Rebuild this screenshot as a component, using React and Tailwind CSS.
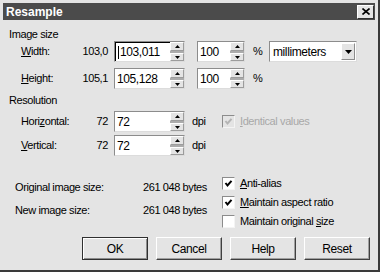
const face = "font-['Liberation_Sans',Arial,sans-serif] tracking-[-0.4px] text-[11px] text-black";

function Tri({ up, color = "#000" }) {
  return (
    <svg width="5" height="3" viewBox="0 0 5 3">
      <path d={up ? "M2.5 0 L5 3 L0 3 Z" : "M0 0 L5 0 L2.5 3 Z"} fill={color} />
    </svg>
  );
}

function Spinner() {
  return (
    <div className="flex flex-col justify-between w-[14px] h-full bg-[#ababab]">
      <div className="h-[9px] flex items-center justify-center bg-[#e4e4e4] border border-t-white border-l-white border-r-[#9c9c9c] border-b-[#9c9c9c]">
        <Tri up />
      </div>
      <div className="h-[8px] flex items-center justify-center bg-[#e4e4e4] border border-t-white border-l-white border-r-[#9c9c9c] border-b-[#9c9c9c]">
        <Tri />
      </div>
    </div>
  );
}

function NumField({ value, w, focused }) {
  return (
    <div
      className={`flex h-[21px] ${w} bg-white border border-t-[#8c8c8c] border-l-[#8c8c8c] border-r-[#dcdcdc] border-b-[#dcdcdc]`}
    >
      <div
        className={`flex-1 flex items-center pl-[2px] ${
          focused ? "border-t border-l border-black" : ""
        }`}
      >
        {focused && <span className="w-px h-[13px] bg-black mr-[1px]" />}
        <span className="text-[12px]">{value}</span>
      </div>
      <Spinner />
    </div>
  );
}

function U({ children }) {
  return <span className="underline underline-offset-[1px]">{children}</span>;
}

function Check({ checked, disabled }) {
  return (
    <div
      className={`w-[13px] h-[13px] flex items-center justify-center border border-t-[#8c8c8c] border-l-[#8c8c8c] border-r-[#f4f4f4] border-b-[#f4f4f4] ${
        disabled ? "bg-[#e4e4e4]" : "bg-white"
      }`}
    >
      {checked && (
        <svg width="9" height="9" viewBox="0 0 9 9">
          <path d="M1.5 4 L3.5 6.5 L7.5 1.8" fill="none" stroke={disabled ? "#b4b4b4" : "#000"} strokeWidth="2" />
        </svg>
      )}
    </div>
  );
}

function Btn({ children, def }) {
  return (
    <div
      className={`w-[66px] h-[23px] flex items-center justify-center text-[12px] bg-[#e4e4e4] ${
        def
          ? "border border-[#303030] shadow-[inset_1px_1px_0_#fff,inset_-1px_-1px_0_#8c8c8c]"
          : "border border-t-white border-l-white border-r-[#404040] border-b-[#404040] shadow-[inset_-1px_-1px_0_#a0a0a0]"
      }`}
    >
      {children}
    </div>
  );
}

export default function App() {
  return (
    <div className={`${face} w-[380px] h-[272px] bg-[#e4e4e4] border-r-2 border-b-2 border-[#3a3a3a] flex flex-col`}>
      {/* title bar */}
      <div className="mx-[3px] mt-[3px] h-[17px] bg-[#4b4b4b] flex items-center justify-between">
        <span className="pl-[3px] text-white font-bold text-[12px] tracking-normal">Resample</span>
        <div className="mr-[1px] w-[17px] h-[14px] bg-[#e4e4e4] flex items-center justify-center border border-t-white border-l-white border-r-[#303030] border-b-[#303030]">
          <svg width="8" height="7" viewBox="0 0 8 7">
            <path d="M0.5 0.5 L7.5 6.5 M7.5 0.5 L0.5 6.5" stroke="#000" strokeWidth="1.6" />
          </svg>
        </div>
      </div>

      {/* image size */}
      <div className="mt-[7px] h-[14px] flex items-center pl-[9px]">Image size</div>
      <div className="h-[21px] flex items-center pl-[21px]">
        <span className="w-[55px]"><U>W</U>idth:</span>
        <span className="w-[32px] text-right">103,0</span>
        <div className="ml-[6px]"><NumField value="103,011" w="w-[71px]" focused /></div>
        <div className="ml-[12px]"><NumField value="100" w="w-[48px]" /></div>
        <span className="ml-[8px] w-[16px]">%</span>
        <div className="w-[88px] h-[21px] bg-white flex items-center border border-t-[#8c8c8c] border-l-[#8c8c8c] border-r-[#dcdcdc] border-b-[#dcdcdc]">
          <span className="flex-1 pl-[3px] text-[12px]">millimeters</span>
          <div className="w-[14px] h-[17px] mr-[1px] flex items-center justify-center bg-[#e4e4e4] border border-t-white border-l-white border-r-[#8c8c8c] border-b-[#8c8c8c]">
            <svg width="7" height="4" viewBox="0 0 7 4"><path d="M0 0 L7 0 L3.5 4 Z" fill="#000" /></svg>
          </div>
        </div>
      </div>
      <div className="mt-[6px] h-[21px] flex items-center pl-[21px]">
        <span className="w-[55px]"><U>H</U>eight:</span>
        <span className="w-[32px] text-right">105,1</span>
        <div className="ml-[6px]"><NumField value="105,128" w="w-[71px]" /></div>
        <div className="ml-[12px]"><NumField value="100" w="w-[48px]" /></div>
        <span className="ml-[8px]">%</span>
      </div>

      {/* resolution */}
      <div className="mt-[4px] h-[14px] flex items-center pl-[9px]">Resolution</div>
      <div className="mt-[4px] h-[21px] flex items-center pl-[21px]">
        <span className="w-[55px]">Hori<U>z</U>ontal:</span>
        <span className="w-[32px] text-right">72</span>
        <div className="ml-[6px]"><NumField value="72" w="w-[71px]" /></div>
        <span className="ml-[7px] w-[30px]">dpi</span>
        <Check checked disabled />
        <span className="ml-[5px] text-[#a8a8a8]"><U>I</U>dentical values</span>
      </div>
      <div className="mt-[3px] h-[21px] flex items-center pl-[21px]">
        <span className="w-[55px]"><U>V</U>ertical:</span>
        <span className="w-[32px] text-right">72</span>
        <div className="ml-[6px]"><NumField value="72" w="w-[71px]" /></div>
        <span className="ml-[7px]">dpi</span>
      </div>

      {/* sizes + options */}
      <div className="mt-[18px] flex">
        <div className="w-[222px] pl-[15px] pt-[2px] flex flex-col">
          <div className="h-[23px] flex items-center">
            <span className="w-[128px]">Original image size:</span>
            <span>261 048 bytes</span>
          </div>
          <div className="h-[23px] flex items-center">
            <span className="w-[128px]">New image size:</span>
            <span>261 048 bytes</span>
          </div>
        </div>
        <div className="flex flex-col">
          <div className="h-[19px] flex items-center gap-[5px]">
            <Check checked />
            <span><U>A</U>nti-alias</span>
          </div>
          <div className="h-[19px] flex items-center gap-[5px]">
            <Check checked />
            <span><U>M</U>aintain aspect ratio</span>
          </div>
          <div className="h-[19px] flex items-center gap-[5px]">
            <Check />
            <span>Maintain original <U>s</U>ize</span>
          </div>
        </div>
      </div>

      {/* buttons */}
      <div className="mt-[6px] pl-[82px] flex gap-[8px]">
        <Btn def>OK</Btn>
        <Btn>Cancel</Btn>
        <Btn>Help</Btn>
        <Btn>Reset</Btn>
      </div>
    </div>
  );
}
